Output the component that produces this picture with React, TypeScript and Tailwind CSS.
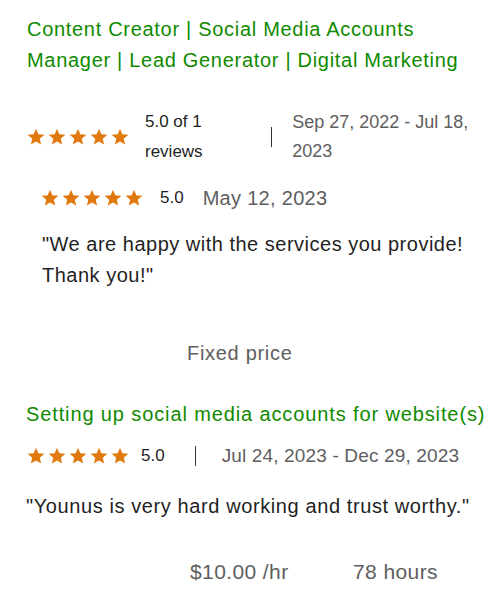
import React from 'react';

const font = { fontFamily: '"Liberation Sans", Arial, sans-serif' };

function Stars() {
  return (
    <div className="flex shrink-0 gap-[1px]">
      {[0, 1, 2, 3, 4].map((i) => (
        <svg key={i} viewBox="0 0 24 24" className="h-[20px] w-[20px] fill-[#e07a10]">
          <path d="M12 17.27L18.18 21l-1.64-7.03L22 9.24l-7.19-.61L12 2 9.19 8.63 2 9.24l5.46 4.73L5.82 21z" />
        </svg>
      ))}
    </div>
  );
}

export default function App() {
  return (
    <div className="min-h-screen bg-white px-[26px] pt-[14px]" style={font}>
      <h2 className="pl-[1px] text-[20px] leading-[31px] tracking-[0.7px] text-[#108a00]">
        Content Creator | Social Media Accounts Manager | Lead Generator | Digital Marketing
      </h2>

      <div className="mt-[31px] flex items-center">
        <Stars />
        <div className="ml-[15px] w-[108px] text-[17px] leading-[30px] text-[#1f1f1f]">
          5.0 of 1 reviews
        </div>
        <div className="ml-[23px] mr-[20px] h-[20px] w-px bg-[#333]" />
        <div className="w-[190px] text-[18px] leading-[29px] text-[#5e5e5e]">
          Sep 27, 2022 - Jul 18, 2023
        </div>
      </div>

      <div className="mt-[16px] pl-[14px]">
        <div className="flex items-center">
          <Stars />
          <span className="ml-[16px] text-[17px] leading-[30px] text-[#1f1f1f]">5.0</span>
          <span className="ml-[19px] text-[20px] leading-[30px] tracking-[0.3px] text-[#5e5e5e]">May 12, 2023</span>
        </div>
        <p className="mt-[16px] pl-[2px] text-[20px] leading-[31px] tracking-[0.5px] text-[#1f1f1f]">
          "We are happy with the services you provide! Thank you!"
        </p>
      </div>

      <div className="mt-[47px] grid grid-cols-[161px_1fr]">
        <div />
        <div className="text-[20px] leading-[30px] tracking-[0.7px] text-[#5e5e5e]">Fixed price</div>
      </div>

      <h3 className="mt-[31px] whitespace-nowrap text-[20px] leading-[30px] tracking-[0.88px] text-[#108a00]">
        Setting up social media accounts for website(s)
      </h3>

      <div className="mt-[12px] flex items-center">
        <Stars />
        <span className="ml-[11px] text-[17px] leading-[30px] text-[#1f1f1f]">5.0</span>
        <div className="ml-[30px] mr-[26px] h-[20px] w-px bg-[#333]" />
        <span className="text-[19px] leading-[30px] tracking-[0.15px] text-[#5e5e5e]">Jul 24, 2023 - Dec 29, 2023</span>
      </div>

      <p className="mt-[20px] whitespace-nowrap text-[20px] leading-[31px] tracking-[0.6px] text-[#1f1f1f]">
        "Younus is very hard working and trust worthy."
      </p>

      <div className="mt-[35px] grid grid-cols-[164px_163px_1fr] text-[21px] leading-[30px] tracking-[0.4px] text-[#5e5e5e]">
        <div />
        <div>$10.00 /hr</div>
        <div>78 hours</div>
      </div>
    </div>
  );
}
